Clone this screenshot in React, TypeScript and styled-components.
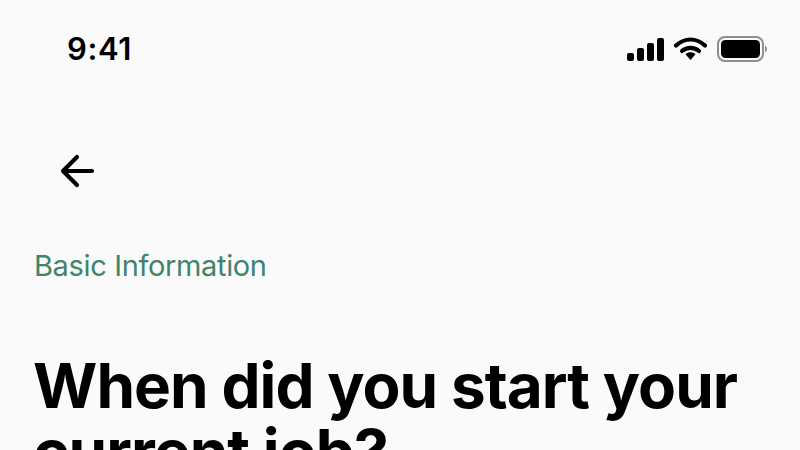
import { createGlobalStyle } from "styled-components";
import styled from "styled-components";

const GlobalStyle = createGlobalStyle`
  html, body {
    margin: 0;
    padding: 0;
    height: 450px;
    overflow: hidden;
    background: #fafafa;
  }
`;

const SignalIcon = () => (
  <svg width="37" height="23" viewBox="0 0 37 23">
    <rect x="0" y="15" width="7" height="8" rx="2" fill="#000" />
    <rect x="10" y="10" width="7" height="13" rx="2" fill="#000" />
    <rect x="20" y="5" width="7" height="18" rx="2" fill="#000" />
    <rect x="30" y="0" width="7" height="23" rx="2" fill="#000" />
  </svg>
);

const WifiIcon = () => (
  <svg width="33" height="24" viewBox="0 0 33 24">
    <path d="M2 8.5 C 11 0.5, 22 0.5, 31 8.5" fill="none" stroke="#000" strokeWidth="4.2" strokeLinecap="round" />
    <path d="M8 14 C 13 9.8, 20 9.8, 25 14" fill="none" stroke="#000" strokeWidth="4.2" strokeLinecap="round" />
    <path d="M11.5 17.2 C 14.5 14.6, 18.5 14.6, 21.5 17.2 L 16.5 23 Z" fill="#000" />
  </svg>
);

const BatteryIcon = () => (
  <svg width="50" height="26" viewBox="0 0 50 26">
    <rect x="1" y="1" width="45" height="24" rx="7" fill="none" stroke="#8e8e8e" strokeWidth="2" />
    <rect x="4" y="4" width="39" height="18" rx="4.5" fill="#000" />
    <path d="M48 9.5 C 49.5 10.5, 50 11.5, 50 13 C 50 14.5, 49.5 15.5, 48 16.5 Z" fill="#8e8e8e" />
  </svg>
);

const BackIcon = () => (
  <svg width="36" height="34" viewBox="0 0 36 34">
    <path d="M33 17 H4 M18 3 L4 17 L18 31" fill="none" stroke="#000" strokeWidth="4.2" strokeLinecap="round" strokeLinejoin="round" />
  </svg>
);

export default function App() {
  return (
    <Screen>
      <GlobalStyle />
      <StatusBar>
        <Time>9:41</Time>
        <StatusIcons>
          <SignalIcon />
          <WifiIcon />
          <BatteryIcon />
        </StatusIcons>
      </StatusBar>
      <BackButton aria-label="Back">
        <BackIcon />
      </BackButton>
      <Section>Basic Information</Section>
      <Title>When did you start your current job?</Title>
    </Screen>
  );
}

const Screen = styled.div`
  width: 800px;
  height: 450px;
  overflow: hidden;
  background: #fafafa;
  color: #000;
  font-family: "Inter", "Liberation Sans", sans-serif;
`;

const StatusBar = styled.div`
  display: flex;
  align-items: center;
  justify-content: space-between;
  height: 36px;
  padding: 31px 33px 0 67px;
`;

const Time = styled.div`
  font-size: 31px;
  font-weight: 600;
  line-height: 36px;
  letter-spacing: 0.6px;
`;

const StatusIcons = styled.div`
  display: flex;
  align-items: center;
  gap: 10px;
`;

const BackButton = styled.button`
  display: block;
  margin: 87px 0 0 59px;
  padding: 0;
  border: 0;
  background: none;
  height: 34px;
  width: 36px;
`;

const Section = styled.div`
  margin: 59px 0 0 34px;
  font-size: 29px;
  line-height: 38px;
  color: #40846c;
  letter-spacing: -0.35px;
`;

const Title = styled.h1`
  margin: 68px 0 0 33px;
  width: 745px;
  font-size: 62px;
  font-weight: 700;
  line-height: 66px;
  letter-spacing: -0.95px;
`;
